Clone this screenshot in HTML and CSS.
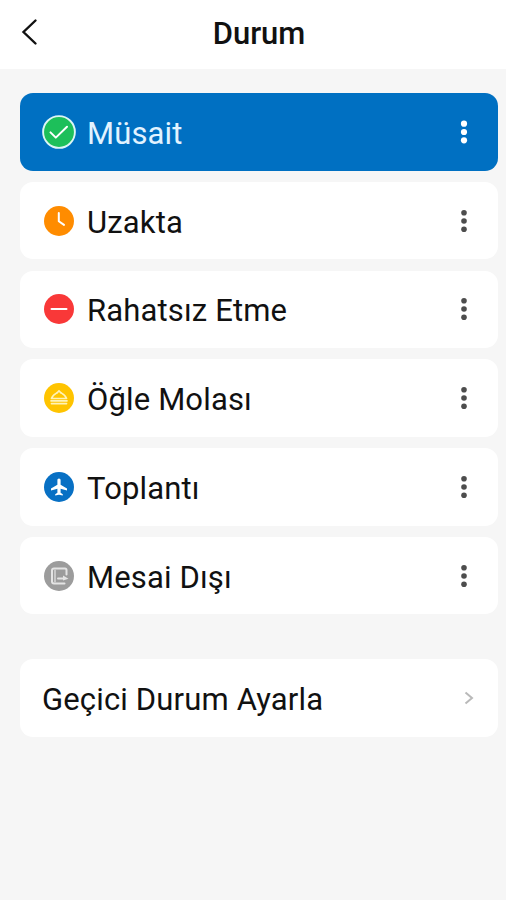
FILE: index.html
```html
<!DOCTYPE html>
<html lang="tr">
<head>
  <meta charset="UTF-8">
  <meta name="viewport" content="width=device-width, initial-scale=1.0">
  <title>Durum</title>
  <link rel="stylesheet" href="styles.css">
</head>

<body>
  <!-- Üst başlık -->
  <header class="header">
    <svg class="back" viewBox="0 0 18 28"><path d="M15.5 2.5 3.5 14l12 11.5"/></svg>
    <h1>Durum</h1>
  </header>

  <!-- Durum listesi -->
  <main class="list">
    <div class="card active">
      <svg class="icon" viewBox="0 0 34 34">
        <circle cx="17" cy="17" r="15.9" fill="#1dbf5a" stroke="#dcf5f5" stroke-width="1.9"/>
        <path class="line" d="m8.5 17.4 5.3 5.2 11.2-10.9"/>
      </svg>
      <span class="label">Müsait</span>
      <svg class="dots" viewBox="0 0 8 24"><circle cx="4" cy="3.7" r="3.1"/><circle cx="4" cy="12" r="3.1"/><circle cx="4" cy="20.3" r="3.1"/></svg>
    </div>

    <div class="card">
      <svg class="icon" viewBox="0 0 34 34">
        <circle cx="17" cy="17" r="15" fill="#ff8c00"/>
        <path class="line" d="M16.800 9v8.300l5.200 3.600"/>
      </svg>
      <span class="label">Uzakta</span>
      <svg class="dots" viewBox="0 0 8 24"><circle cx="4" cy="3.7" r="2.8"/><circle cx="4" cy="12" r="2.8"/><circle cx="4" cy="20.3" r="2.8"/></svg>
    </div>

    <div class="card">
      <svg class="icon" viewBox="0 0 34 34">
        <circle cx="17" cy="17" r="15" fill="#f93838"/>
        <path class="line" d="M9.500 17h15"/>
      </svg>
      <span class="label">Rahatsız Etme</span>
      <svg class="dots" viewBox="0 0 8 24"><circle cx="4" cy="3.7" r="2.8"/><circle cx="4" cy="12" r="2.8"/><circle cx="4" cy="20.3" r="2.8"/></svg>
    </div>

    <div class="card">
      <svg class="icon" viewBox="0 0 34 34">
        <circle cx="17" cy="17" r="15" fill="#ffc400"/>
        <path class="thin" d="M9.500 17.500c.8-3.500 4-4.600 6-6l1.500-1.700 1.500 1.700c2 1.400 5.200 2.500 6 6z"/>
        <path class="thin" d="M9 19.800h16M9.500 22.600h15"/>
      </svg>
      <span class="label">Öğle Molası</span>
      <svg class="dots" viewBox="0 0 8 24"><circle cx="4" cy="3.7" r="2.8"/><circle cx="4" cy="12" r="2.8"/><circle cx="4" cy="20.3" r="2.8"/></svg>
    </div>

    <div class="card">
      <svg class="icon" viewBox="0 0 34 34">
        <circle cx="17" cy="17" r="15" fill="#0870c4"/>
        <path fill="#fff" d="M17 8.500c-1 0-1.600.8-1.600 1.800v4.500L9 18.500v2l6.400-1.700v3.900l-2.200 1.500v1.400l3.800-.8 3.800.8v-1.400l-2.200-1.500v-3.900l6.400 1.700v-2l-6.400-3.700v-4.500c0-1-.6-1.800-1.600-1.800z"/>
      </svg>
      <span class="label">Toplantı</span>
      <svg class="dots" viewBox="0 0 8 24"><circle cx="4" cy="3.7" r="2.8"/><circle cx="4" cy="12" r="2.8"/><circle cx="4" cy="20.3" r="2.8"/></svg>
    </div>

    <div class="card">
      <svg class="icon" viewBox="0 0 34 34">
        <circle cx="17" cy="17" r="15" fill="#9c9c9c"/>
        <path class="frame" d="M24.500 15.500v-4.500q0-1.500-1.500-1.500H12q-2 0-2 2v11q0 2 2 2h10.500"/>
        <path class="frame side" d="M13 11v12"/>
        <path class="frame" d="M16 19.600h6"/>
        <path fill="#e4e4e4" d="m21 16.500 5.500 3.300-5.500 1.700z"/>
      </svg>
      <span class="label">Mesai Dışı</span>
      <svg class="dots" viewBox="0 0 8 24"><circle cx="4" cy="3.7" r="2.8"/><circle cx="4" cy="12" r="2.8"/><circle cx="4" cy="20.3" r="2.8"/></svg>
    </div>

    <!-- Geçici durum -->
    <div class="card temporary">
      <span class="label">Geçici Durum Ayarla</span>
      <svg class="chevron" viewBox="0 0 10 14"><path d="m1.500 1.500 6.500 5.500-6.500 5.500"/></svg>
    </div>
  </main>
</body>
</html>
```
FILE: styles.css
```css
/* Genel stiller */
* {
  box-sizing: border-box;
}

body {
  margin: 0;
  min-height: 100vh;
  background-color: #f6f6f6;
  color: #111;
  font-family: Roboto, sans-serif;
}

/* Üst başlık */
.header {
  display: grid;
  grid-template-columns: 40px 1fr 40px;
  align-items: center;
  height: 69px;
  padding: 0 6px 4px 18px;
  background-color: #fff;
}

.back {
  width: 18px;
  height: 28px;
  margin: 0 0 1px 1.5px;
  fill: none;
  stroke: #111;
  stroke-width: 2.4;
  stroke-linecap: round;
}

h1 {
  margin: 2px 0 0;
  font-size: 31px;
  font-weight: 500;
  line-height: 36px;
  text-align: center;
}

/* Liste */
.list {
  display: flex;
  flex-direction: column;
  gap: 11.3px;
  padding: 24px 8.5px 0 20px;
}

.card {
  display: flex;
  align-items: center;
  height: 77.5px;
  padding: 0 29.5px 0 22px;
  border-radius: 13px;
  background-color: #fff;
}

.active {
  background-color: #0070c2;
  color: #e2f3ff;
}

.label {
  flex: 1;
  padding-top: 4px;
  font-size: 31px;
  line-height: 36px;
  letter-spacing: 0.15px;
}

.icon {
  width: 34px;
  height: 34px;
  margin-right: 11px;
}

/* İkon çizgileri */
.line,
.thin,
.frame {
  fill: none;
  stroke: #fff;
  stroke-width: 2;
  stroke-linecap: round;
  stroke-linejoin: round;
}

.thin {
  stroke: #fff3b8;
  stroke-width: 1.7;
}

.frame {
  stroke: #e4e4e4;
  stroke-width: 2;
}

.side {
  stroke: #c8c8c8;
}

.dots {
  width: 8px;
  height: 24px;
  fill: #4d4d4d;
}

.active .dots {
  fill: #fff;
}

/* Geçici durum */
.temporary {
  margin-top: 33.5px;
  padding-right: 24px;
}

.chevron {
  width: 10px;
  height: 14px;
  fill: none;
  stroke: #b9b9b9;
  stroke-width: 2;
}
```
